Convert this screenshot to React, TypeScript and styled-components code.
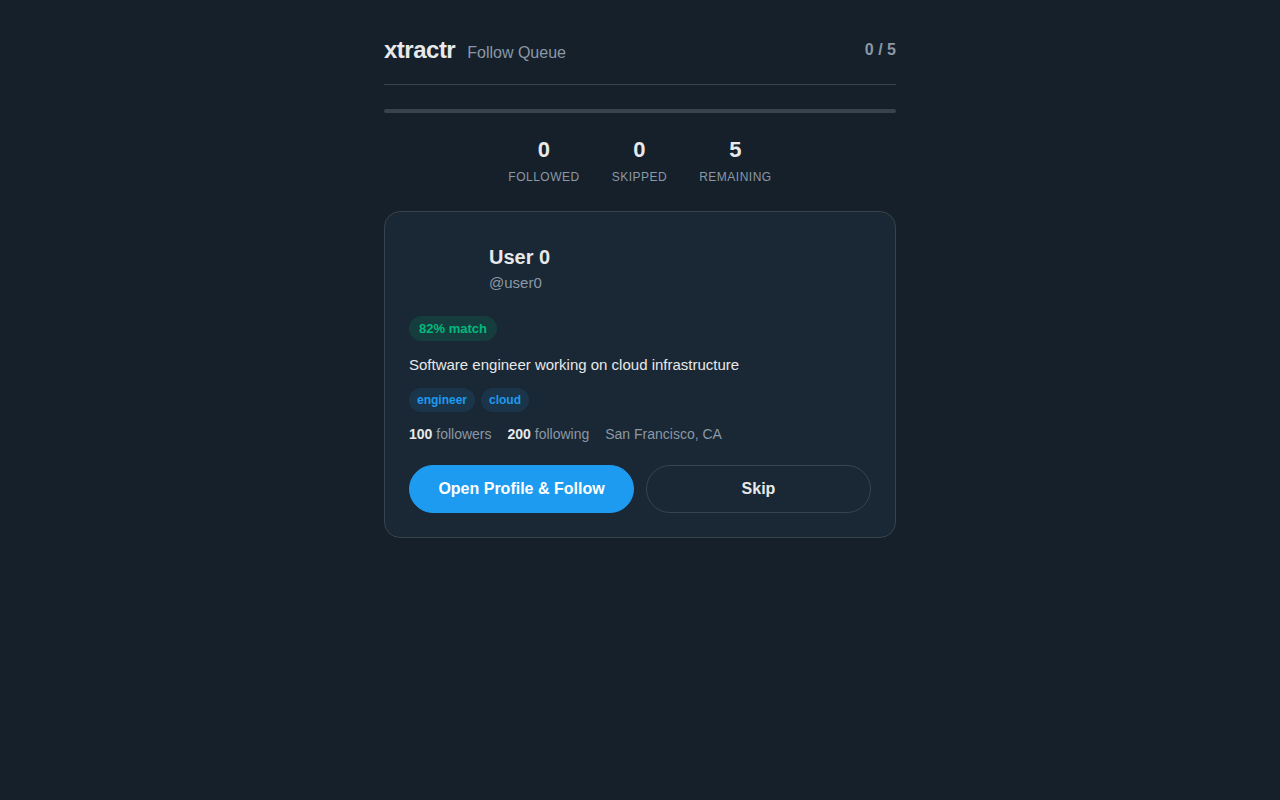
import styled, { createGlobalStyle } from 'styled-components'

const GlobalStyle = createGlobalStyle`
  html, body {
    margin: 0;
    padding: 0;
    background: #15202b;
    color: #e7e9ea;
    font-family: "Liberation Sans", Arial, sans-serif;
  }
`

const Page = styled.div`
  max-width: 512px;
  margin: 0 auto;
  padding: 36px 0;
`
const Header = styled.header`
  display: flex;
  align-items: center;
  justify-content: space-between;
  padding-bottom: 20px;
  border-bottom: 1px solid #38444d;
`
const Brand = styled.div`
  display: flex;
  align-items: baseline;
  gap: 12px;
`
const Logo = styled.h1`
  margin: 0;
  font-size: 24px;
  font-weight: 700;
  letter-spacing: -0.5px;
  color: #e7e9ea;
`
const Subtitle = styled.span`
  font-size: 16px;
  color: #8b98a5;
`
const Counter = styled.span`
  font-size: 16px;
  font-weight: 700;
  color: #8b98a5;
`
const Progress = styled.div`
  height: 4px;
  margin: 24px 0;
  border-radius: 2px;
  background: #38444d;
  overflow: hidden;
`
const ProgressFill = styled.div`
  height: 100%;
  background: #1d9bf0;
`
const Stats = styled.div`
  display: flex;
  justify-content: center;
  gap: 32px;
  margin-bottom: 27px;
`
const Stat = styled.div`
  display: flex;
  flex-direction: column;
  align-items: center;
  gap: 7px;
`
const StatValue = styled.span`
  font-size: 22px;
  font-weight: 700;
  color: #e7e9ea;
`
const StatLabel = styled.span`
  font-size: 12px;
  letter-spacing: 0.5px;
  text-transform: uppercase;
  color: #8b98a5;
`
const Card = styled.div`
  background: #1a2734;
  border: 1px solid #38444d;
  border-radius: 16px;
  padding: 24px;
`
const Top = styled.div`
  display: flex;
  align-items: flex-start;
  gap: 16px;
  margin-bottom: 16px;
`
const Avatar = styled.div`
  width: 64px;
  height: 64px;
  border-radius: 50%;
  flex-shrink: 0;
`
const Names = styled.div`
  display: flex;
  flex-direction: column;
  padding-top: 10px;
  gap: 5px;
`
const Name = styled.span`
  font-size: 20px;
  font-weight: 700;
  color: #e7e9ea;
`
const Handle = styled.span`
  font-size: 15px;
  color: #8b98a5;
`
const Match = styled.span`
  display: inline-block;
  padding: 5px 10px;
  border-radius: 999px;
  font-size: 13px;
  font-weight: 700;
  color: #00ba7c;
  background: rgba(0, 186, 124, 0.15);
`
const Bio = styled.p`
  margin: 14px 0 13px;
  font-size: 15px;
  line-height: 20px;
  color: #e7e9ea;
`
const Tags = styled.div`
  display: flex;
  gap: 6px;
  margin-bottom: 14px;
`
const Tag = styled.span`
  padding: 5px 8px;
  border-radius: 999px;
  font-size: 12px;
  font-weight: 700;
  color: #1d9bf0;
  background: rgba(29, 155, 240, 0.12);
`
const Meta = styled.div`
  display: flex;
  gap: 16px;
  font-size: 14px;
  color: #8b98a5;
  margin-bottom: 23px;
  b {
    color: #e7e9ea;
  }
`
const Actions = styled.div`
  display: grid;
  grid-template-columns: 1fr 1fr;
  gap: 12px;
`
const Button = styled.button<{ $primary?: boolean }>`
  height: 48px;
  border-radius: 999px;
  font-family: inherit;
  font-size: 16px;
  font-weight: 700;
  cursor: pointer;
  color: ${(p) => (p.$primary ? '#ffffff' : '#e7e9ea')};
  background: ${(p) => (p.$primary ? '#1d9bf0' : 'transparent')};
  border: 1px solid ${(p) => (p.$primary ? '#1d9bf0' : '#38444d')};
`

export default function App() {
  const done = 0
  const total = 5
  return (
    <>
      <GlobalStyle />
      <Page>
        <Header>
          <Brand>
            <Logo>xtractr</Logo>
            <Subtitle>Follow Queue</Subtitle>
          </Brand>
          <Counter>
            {done} / {total}
          </Counter>
        </Header>
        <Progress>
          <ProgressFill style={{ width: `${(done / total) * 100}%` }} />
        </Progress>
        <Stats>
          <Stat>
            <StatValue>0</StatValue>
            <StatLabel>Followed</StatLabel>
          </Stat>
          <Stat>
            <StatValue>0</StatValue>
            <StatLabel>Skipped</StatLabel>
          </Stat>
          <Stat>
            <StatValue>5</StatValue>
            <StatLabel>Remaining</StatLabel>
          </Stat>
        </Stats>
        <Card>
          <Top>
            <Avatar />
            <Names>
              <Name>User 0</Name>
              <Handle>@user0</Handle>
            </Names>
          </Top>
          <Match>82% match</Match>
          <Bio>Software engineer working on cloud infrastructure</Bio>
          <Tags>
            <Tag>engineer</Tag>
            <Tag>cloud</Tag>
          </Tags>
          <Meta>
            <span>
              <b>100</b> followers
            </span>
            <span>
              <b>200</b> following
            </span>
            <span>San Francisco, CA</span>
          </Meta>
          <Actions>
            <Button $primary>Open Profile &amp; Follow</Button>
            <Button>Skip</Button>
          </Actions>
        </Card>
      </Page>
    </>
  )
}
